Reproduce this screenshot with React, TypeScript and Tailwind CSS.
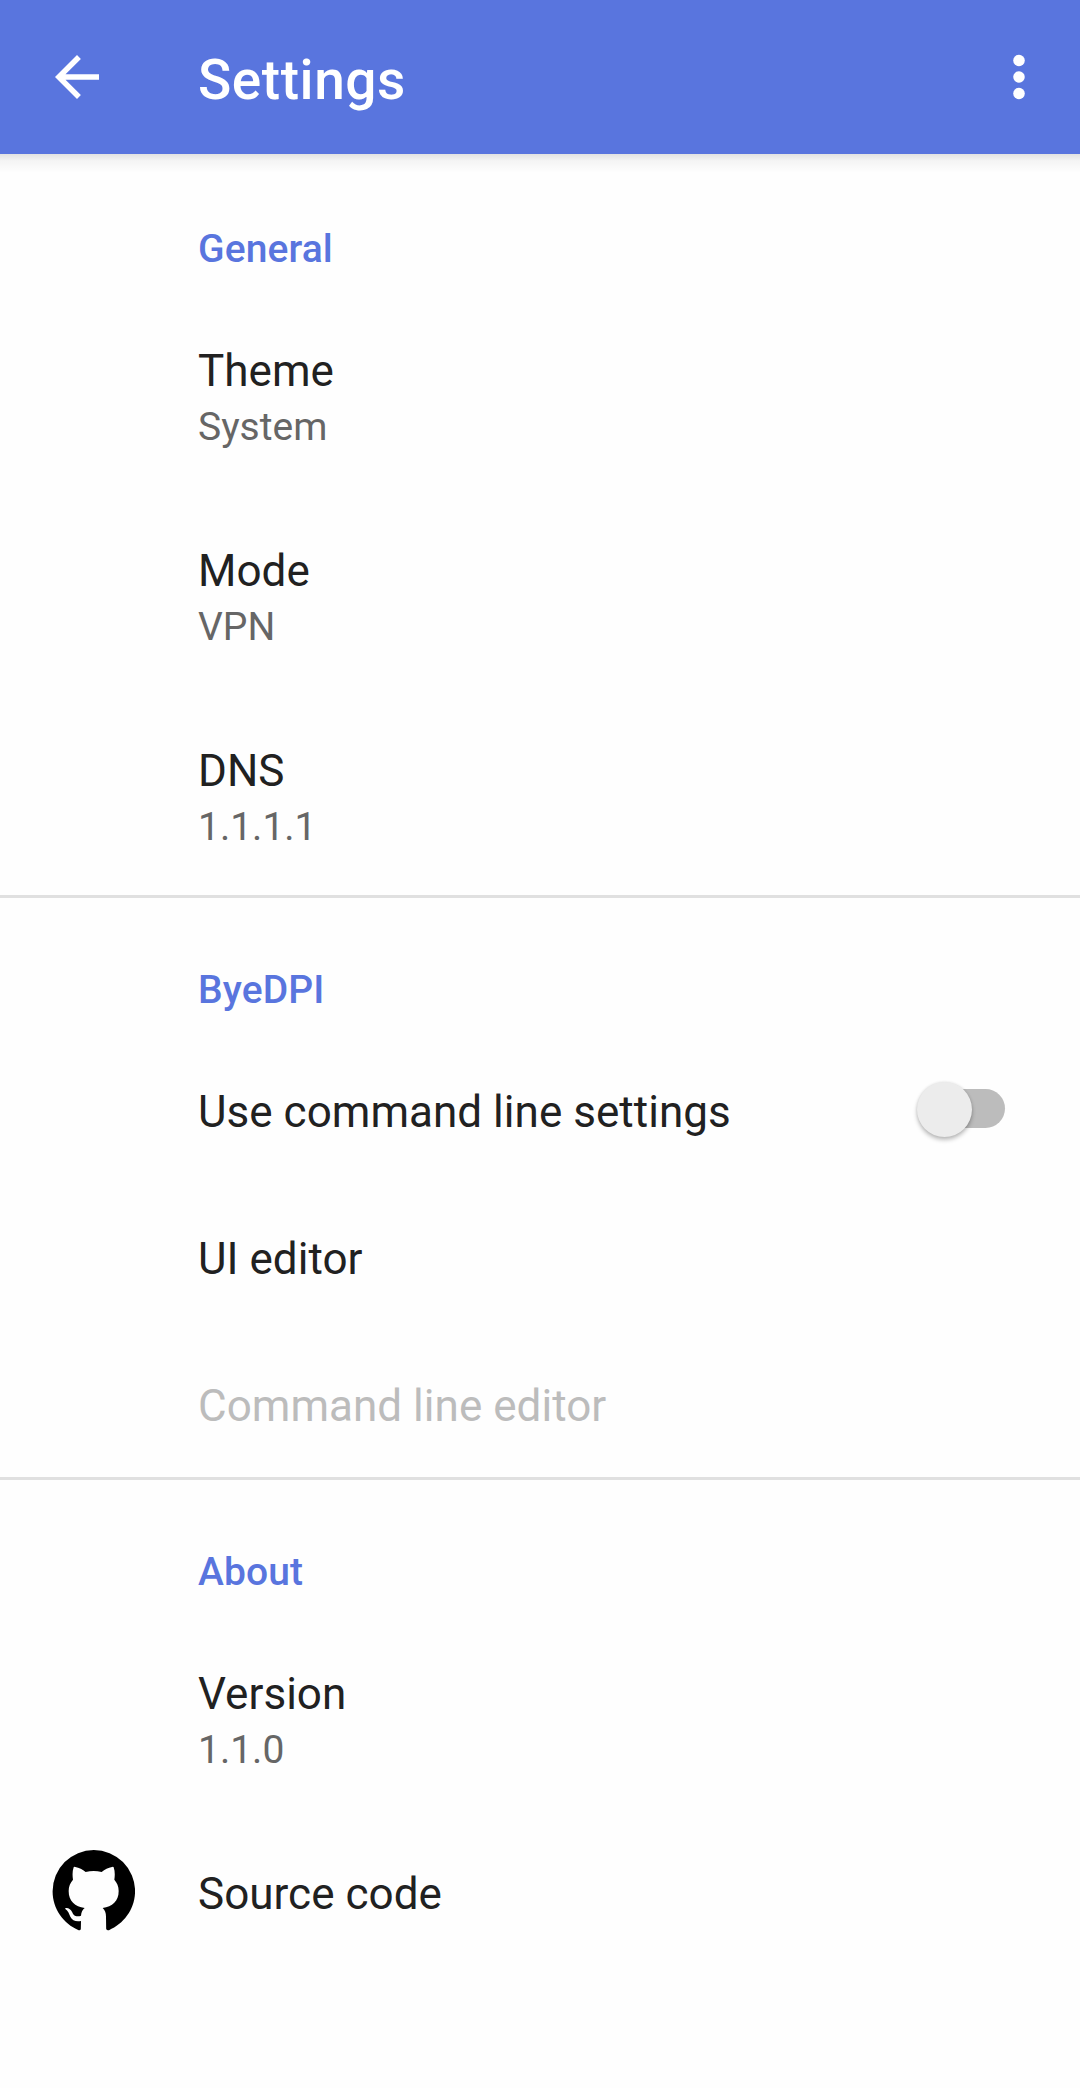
import type { ReactNode } from "react";

function Category({ children }: { children: ReactNode }) {
  return (
    <h2 className="h-[141px] pt-[72px] pl-[198px] text-[39px] leading-[46px] font-medium tracking-[0.1px] text-[#5975de]">
      {children}
    </h2>
  );
}

type PreferenceProps = {
  title: string;
  summary?: string;
  disabled?: boolean;
  icon?: ReactNode;
  widget?: ReactNode;
};

function Preference({ title, summary, disabled, icon, widget }: PreferenceProps) {
  return (
    <div className={summary ? "flex h-[200px]" : "flex h-[147px]"}>
      <div className="w-[198px] shrink-0 pt-[32px] pl-[52px]">{icon}</div>
      <div className="grow pt-[50px]">
        <div
          className={
            disabled
              ? "text-[44px] leading-[52px] tracking-[0.03px] text-[#bcbcbc]"
              : "text-[44px] leading-[52px] tracking-[0.03px] text-[#212121]"
          }
        >
          {title}
        </div>
        {summary && (
          <div className="mt-[7px] text-[39px] leading-[46px] text-[#666666]">{summary}</div>
        )}
      </div>
      {widget}
    </div>
  );
}

function Switch() {
  return (
    <div
      role="switch"
      aria-checked="false"
      className="mt-[53px] mr-[75px] flex h-[39px] w-[78px] items-center rounded-full bg-[#bcbcbc]"
    >
      <div className="mt-px -ml-[10px] size-[55px] shrink-0 rounded-full bg-[#ececec] shadow-[0_3px_4px_rgba(0,0,0,0.25),0_0_3px_rgba(0,0,0,0.1)]" />
    </div>
  );
}

function GithubMark() {
  return (
    <svg viewBox="36 30 249 243" className="h-[81px] w-[83px]" fill="#000">
      <path d="M161.500 30A123.700 123.700 0 0 0 37.800 153.700C37.800 206 70 251 116 270.500Q122 272 122.500 266L123 243C108 246 97 242 91 230C87 221 84 212 76 207Q74 203 80 204C94 206 95 216 101 224C106 230 116 230 123 227C124 217 127 209 134 204C105 200 86 184 86 153C86 139 91 128 99 119C97 106 97 93 101 82Q102 79 106 81C117 83 128 89 137 96C153 92 169 92 185 96C194 89 205 83 216 81Q220 79 221 82C225 93 225 106 223 119C231 128 236 139 236 153C236 184 217 200 188 204C195 210 198 219 198 230L198.500 266Q200 272 207 270.500C253 251 285.200 206 285.200 153.700A123.700 123.700 0 0 0 161.500 30Z" />
    </svg>
  );
}

export default function App() {
  return (
    <div className="h-[2088px] w-[1080px] overflow-hidden bg-[#fefefe] font-['Roboto',sans-serif]">
      <header className="relative flex h-[154px] bg-[#5975de] pl-[44px] text-white">
        <svg viewBox="0 0 24 24" className="mt-[44px] size-[66px]" fill="currentColor">
          <path d="M20 11H7.83l5.59-5.59L12 4l-8 8 8 8 1.41-1.41L7.83 13H20v-2z" />
        </svg>
        <h1 className="mt-[48px] ml-[88px] text-[55px] leading-[64px] font-medium tracking-[0.55px]">
          Settings
        </h1>
        <svg viewBox="0 0 24 24" className="mt-[44px] mr-[28px] ml-auto size-[66px]" fill="currentColor">
          <circle cx="12" cy="6" r="2.1" />
          <circle cx="12" cy="12" r="2.1" />
          <circle cx="12" cy="18" r="2.1" />
        </svg>
        <div className="absolute inset-x-0 top-full h-[19px] bg-linear-to-b from-black/11 via-black/4 via-35% to-transparent" />
      </header>
      <main>
        <section>
          <Category>General</Category>
          <Preference title="Theme" summary="System" />
          <Preference title="Mode" summary="VPN" />
          <Preference title="DNS" summary="1.1.1.1" />
        </section>
        <section className="-mb-[3px] border-t-[3px] border-[#e0e0e0]">
          <div className="-mt-[3px]">
            <Category>ByeDPI</Category>
            <Preference title="Use command line settings" widget={<Switch />} />
            <Preference title="UI editor" />
            <Preference title="Command line editor" disabled />
          </div>
        </section>
        <section className="mt-[3px] border-t-[3px] border-[#e0e0e0]">
          <div className="-mt-[3px]">
            <Category>About</Category>
            <Preference title="Version" summary="1.1.0" />
            <Preference title="Source code" icon={<GithubMark />} />
          </div>
        </section>
      </main>
    </div>
  );
}
